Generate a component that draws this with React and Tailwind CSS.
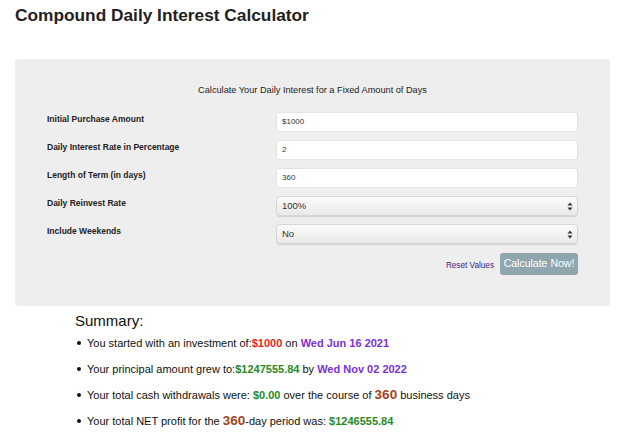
export default function App() {
  const rows = [
    { label: "Initial Purchase Amount", value: "$1000", type: "input" },
    { label: "Daily Interest Rate in Percentage", value: "2", type: "input" },
    { label: "Length of Term (in days)", value: "360", type: "input" },
    { label: "Daily Reinvest Rate", value: "100%", type: "select" },
    { label: "Include Weekends", value: "No", type: "select" },
  ];
  const font = { fontFamily: '"Liberation Sans", Arial, sans-serif' };
  const Bullet = () => (
    <span className="w-[12px] flex items-center pl-[2px]">
      <span className="block w-[4px] h-[4px] rounded-full bg-[#111]" />
    </span>
  );
  return (
    <div className="w-[625px] h-[448px] bg-white text-[#222] overflow-hidden" style={font}>
      <h1 className="pl-[15px] pt-[4px] text-[17.3px] leading-[22px] font-bold text-[#222]">
        Compound Daily Interest Calculator
      </h1>
      <div className="mx-[15px] mt-[33px] h-[247px] rounded-[3px] bg-[#eeeeee] px-[32px] pt-[25px]">
        <p className="text-center text-[9.2px] leading-[12px] text-[#222]">
          Calculate Your Daily Interest for a Fixed Amount of Days
        </p>
        <div className="mt-[16px] flex flex-col gap-[8px]">
          {rows.map((r) => (
            <div key={r.label} className="flex items-start">
              <div className="w-[229px] text-[8.5px] font-bold leading-[12px] pt-[1px] text-[#222]">
                {r.label}
              </div>
              {r.type === "input" ? (
                <div className="flex-1 h-[20px] rounded-[3px] bg-white border border-[#e3e3e3] flex items-center pl-[5px] text-[8px] text-[#333]">
                  {r.value}
                </div>
              ) : (
                <div className="flex-1 h-[20px] rounded-[4px] border border-[#d6d6d6] bg-gradient-to-b from-[#fbfbfb] to-[#e9e9e9] shadow-[0_1px_1px_rgba(0,0,0,0.12)] flex items-center justify-between pl-[5px] pr-[4px] text-[9.5px] text-[#333]">
                  <span>{r.value}</span>
                  <svg width="6" height="9" viewBox="0 0 6 9">
                    <path d="M3 0.5 L5.5 3.5 H0.5 Z" fill="#333" />
                    <path d="M3 8.5 L5.5 5.5 H0.5 Z" fill="#333" />
                  </svg>
                </div>
              )}
            </div>
          ))}
        </div>
        <div className="mt-[9px] flex items-end justify-end gap-[6px]">
          <span className="text-[8.2px] leading-[12px] mb-[3px] text-[#3d1a8a]">Reset Values</span>
          <div className="w-[78px] h-[22px] rounded-[3px] bg-[#8fa6ae] text-white text-[10.5px] flex items-center justify-center">
            Calculate Now!
          </div>
        </div>
      </div>
      <div className="pl-[75px] mt-[6px]">
        <h2 className="text-[15px] leading-[18px] text-[#111]">Summary:</h2>
        <ul className="mt-[5px] flex flex-col gap-[10px] text-[11px] leading-[16px] text-[#111]">
          <li className="flex items-center">
            <Bullet />
            <span>
              You started with an investment of:
              <b className="text-[#ee1c1c]">$1000</b> on{" "}
              <b className="text-[#7a2fe0]">Wed Jun 16 2021</b>
            </span>
          </li>
          <li className="flex items-center">
            <Bullet />
            <span>
              Your principal amount grew to:
              <b className="text-[#2a8a1e]">$1247555.84</b> by{" "}
              <b className="text-[#7a2fe0]">Wed Nov 02 2022</b>
            </span>
          </li>
          <li className="flex items-center">
            <Bullet />
            <span>
              Your total cash withdrawals were: <b className="text-[#2a8a1e]">$0.00</b> over the course of{" "}
              <b className="text-[#a3431a] text-[13.5px]">360</b> business days
            </span>
          </li>
          <li className="flex items-center">
            <Bullet />
            <span>
              Your total NET profit for the <b className="text-[#a3431a] text-[13.5px]">360</b>-day period was:{" "}
              <b className="text-[#2a8a1e]">$1246555.84</b>
            </span>
          </li>
        </ul>
      </div>
    </div>
  );
}
